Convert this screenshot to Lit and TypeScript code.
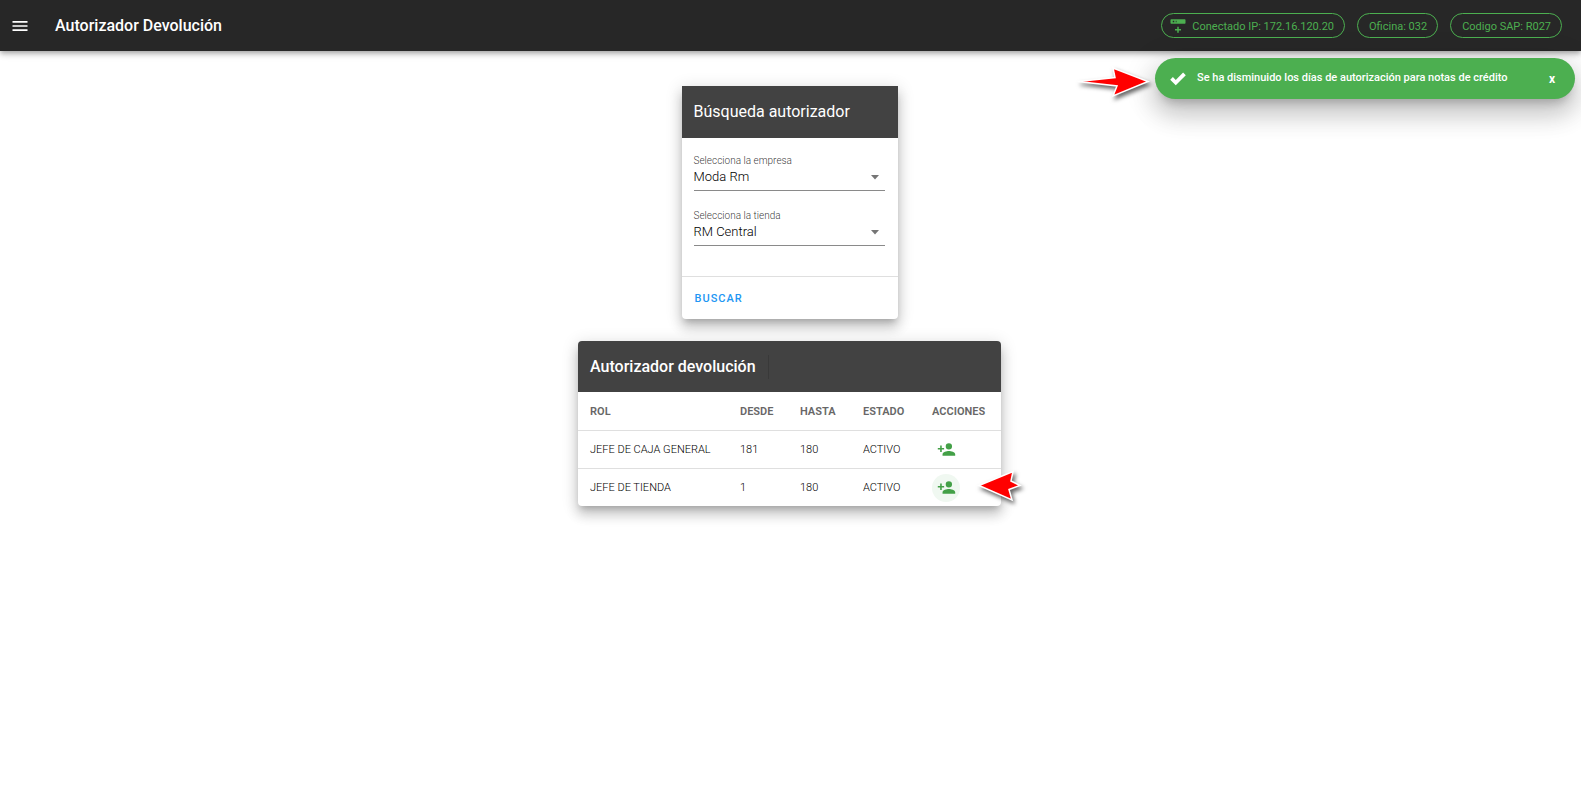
import { LitElement, html, css } from "lit";
import { customElement, state } from "lit/decorators.js";

interface Rol {
  nombre: string;
  desde: number;
  hasta: number;
  estado: string;
  activo?: boolean;
}

@customElement("app-root")
export class AppRoot extends LitElement {
  static styles = css`
    :host {
      display: block;
      min-height: 100vh;
      background: #fff;
      font-family: Roboto, "Liberation Sans", sans-serif;
      color: rgba(0, 0, 0, 0.87);
    }
    *, *::before, *::after { box-sizing: border-box; }
    button, select { font-family: inherit; margin: 0; border: 0; background: none; cursor: pointer; }
    svg { display: block; }

    .bar {
      display: flex;
      align-items: center;
      height: 51px;
      padding: 0 19px 0 10px;
      background: #272727;
      color: #fff;
      box-shadow: 0 2px 4px -1px rgba(0, 0, 0, 0.2), 0 4px 5px rgba(0, 0, 0, 0.14), 0 1px 10px rgba(0, 0, 0, 0.12);
    }
    .menu { padding: 0; color: #fff; }
    .title { margin: 0 auto 0 25px; font-size: 16px; line-height: 24px; font-weight: 500; }
    .chips { display: flex; gap: 12px; }
    .chip {
      display: flex;
      align-items: center;
      height: 25px;
      padding: 1px 10px 0 11px;
      border: 1px solid #4caf50;
      border-radius: 13px;
      color: #4caf50;
      font-size: 11px;
      white-space: nowrap;
    }
    .chip svg { margin: 0 5px 0 -4px; }

    .toast {
      position: absolute;
      top: 58px;
      right: 6px;
      display: flex;
      align-items: center;
      min-width: 420px;
      height: 41px;
      padding: 0 11px 0 14px;
      border-radius: 21px;
      background: #4caf50;
      color: #fff;
      font-size: 11px;
      font-weight: 500;
      box-shadow: 0 8px 10px -5px rgba(0, 0, 0, 0.2), 0 16px 24px 2px rgba(0, 0, 0, 0.14), 0 6px 30px 5px rgba(0, 0, 0, 0.12);
    }
    .toast p { flex: 1; margin: 0 16px 2px 10px; line-height: 16px; }
    .toast button { width: 24px; padding: 0; color: #fff; font-size: 12px; font-weight: 700; }

    .page {
      display: flex;
      flex-direction: column;
      align-items: center;
      gap: 22px;
      padding: 35px 2px 35px 0;
    }
    .card {
      border-radius: 4px;
      background: #fff;
      box-shadow: 0 5px 6px -3px rgba(0, 0, 0, 0.2), 0 9px 12px 1px rgba(0, 0, 0, 0.14), 0 3px 16px 2px rgba(0, 0, 0, 0.12);
    }
    .search { width: 216px; border-top-left-radius: 0; border-top-right-radius: 0; }
    .head {
      margin: 0;
      padding: 14px 12px 13px;
      border-radius: inherit;
      border-bottom-left-radius: 0;
      border-bottom-right-radius: 0;
      background: #424242;
      color: #fff;
      font-size: 16px;
      line-height: 24px;
      font-weight: 400;
    }
    .search .head { padding-bottom: 14px; }
    .medium { font-weight: 500; }
    .medium span {
      display: inline-block;
      padding-right: 12px;
      border-right: 1px solid #393939;
    }
    .fields { display: grid; gap: 19px; padding: 17px 13px 30px 12px; }
    .field { display: grid; border-bottom: 1px solid #8a8a8a; }
    .field label { font-size: 10px; line-height: 12px; font-weight: 300; color: rgba(0, 0, 0, 0.8); }
    .pick { display: grid; align-items: center; }
    .pick > * { grid-area: 1 / 1; }
    .pick select {
      appearance: none;
      width: 100%;
      height: 23px;
      padding: 0 24px 4px 0;
      font-size: 13px;
      font-weight: 300;
      color: #000;
      outline: none;
    }
    .pick svg { justify-self: end; margin: 0 5px 2px 0; pointer-events: none; }
    .actions { padding: 8px 5px; border-top: 1px solid #dfdfdf; }
    .link {
      padding: 0 8px;
      height: 26px;
      color: #2196f3;
      font-size: 11px;
      font-weight: 500;
      letter-spacing: 1px;
      text-transform: uppercase;
      display: block;
    }

    table { border-collapse: separate; border-spacing: 0; font-size: 11px; }
    th, td { height: 38px; padding: 0 12px; text-align: left; font-weight: 400; white-space: nowrap; }
    thead th { font-weight: 700; color: rgba(0, 0, 0, 0.6); }
    tbody td { border-top: 1px solid #dfdfdf; font-weight: 300; color: #000; }
    .c-rol { width: 150px; }
    .c-desde { width: 60px; }
    .c-hasta { width: 63px; }
    .c-estado { width: 69px; }
    .c-acciones { width: 81px; }
    .add {
      display: grid;
      place-items: center;
      width: 28px;
      height: 28px;
      padding: 0;
      border-radius: 50%;
      color: #43a047;
    }
    .on { background: #f0f8f1; }

    .arrow { position: absolute; overflow: visible; filter: drop-shadow(2px 3px 2px rgba(0, 0, 0, 0.6)); pointer-events: none; }
    .to-toast { top: 66px; right: 432px; }
    .anchor { position: relative; }
    .to-row { right: -20px; bottom: 5px; }
  `;

  @state() private empresa = "Moda Rm";
  @state() private tienda = "RM Central";
  @state() private aviso = true;

  private roles: Rol[] = [
    { nombre: "JEFE DE CAJA GENERAL", desde: 181, hasta: 180, estado: "ACTIVO" },
    { nombre: "JEFE DE TIENDA", desde: 1, hasta: 180, estado: "ACTIVO", activo: true },
  ];

  private campo(id: string, texto: string, valor: string) {
    return html`
      <div class="field">
        <label for=${id}>${texto}</label>
        <div class="pick">
          <select id=${id}><option>${valor}</option></select>
          <svg width="10" height="5" viewBox="0 0 10 5" aria-hidden="true"><path d="M1 0h8L5 4.4z" fill="#757575" /></svg>
        </div>
      </div>
    `;
  }

  render() {
    return html`
      <header class="bar">
        <button class="menu" aria-label="Menú">
          <svg width="20" height="20" viewBox="0 0 24 24" fill="currentColor"><path d="M3 6h18v2H3V6m0 5h18v2H3v-2m0 5h18v2H3v-2Z" /></svg>
        </button>
        <h1 class="title">Autorizador Devolución</h1>
        <div class="chips">
          <span class="chip">
            <svg width="18" height="18" viewBox="0 0 24 24" fill="currentColor" aria-hidden="true">
              <path fill-rule="evenodd" d="M3 3h18a1 1 0 0 1 1 1v4a1 1 0 0 1-1 1H3a1 1 0 0 1-1-1V4a1 1 0 0 1 1-1m6 4h1V5H9v2M5 5v2h2V5H5M11 13h2v3h3v2h-3v3h-2v-3H8v-2h3v-3Z" />
            </svg>
            Conectado IP: 172.16.120.20
          </span>
          <span class="chip">Oficina: 032</span>
          <span class="chip">Codigo SAP: R027</span>
        </div>
      </header>

      ${this.aviso
        ? html`
            <div class="toast" role="status">
              <svg width="18" height="18" viewBox="0 0 24 24" fill="currentColor" aria-hidden="true"><path d="M9 20.400 1.600 13l3.600-3.600L9 13.200 18.800 3.400l3.600 3.600L9 20.400Z" /></svg>
              <p>Se ha disminuido los días de autorización para notas de crédito</p>
              <button aria-label="Cerrar" @click=${() => (this.aviso = false)}>x</button>
            </div>
          `
        : null}
      <svg class="arrow to-toast" width="69" height="32" viewBox="0 0 69 32" aria-hidden="true">
        <path d="M-2 15.500 35 11.500 33 2 68 15.500 33 30 37 20Z" fill="#f00" stroke="#fff" stroke-width="1.500" />
      </svg>

      <main class="page">
        <section class="card search">
          <h2 class="head">Búsqueda autorizador</h2>
          <div class="fields">
            ${this.campo("empresa", "Selecciona la empresa", this.empresa)}
            ${this.campo("tienda", "Selecciona la tienda", this.tienda)}
          </div>
          <div class="actions"><button class="link">Buscar</button></div>
        </section>

        <div class="anchor">
          <section class="card">
            <h2 class="head medium"><span>Autorizador devolución</span></h2>
            <table>
              <thead>
                <tr>
                  <th class="c-rol">ROL</th>
                  <th class="c-desde">DESDE</th>
                  <th class="c-hasta">HASTA</th>
                  <th class="c-estado">ESTADO</th>
                  <th class="c-acciones">ACCIONES</th>
                </tr>
              </thead>
              <tbody>
                ${this.roles.map(
                  (r) => html`
                    <tr>
                      <td>${r.nombre}</td>
                      <td>${r.desde}</td>
                      <td>${r.hasta}</td>
                      <td>${r.estado}</td>
                      <td>
                        <button class="add ${r.activo ? "on" : ""}" aria-label="Agregar autorizador">
                          <svg width="19" height="19" viewBox="0 0 24 24" fill="currentColor"><path d="M15 14c-2.670 0-8 1.330-8 4v2h16v-2c0-2.670-5.330-4-8-4m-9-4V7H4v3H1v2h3v3h2v-3h3v-2m6 2a4 4 0 0 0 4-4 4 4 0 0 0-4-4 4 4 0 0 0-4 4 4 4 0 0 0 4 4Z" /></svg>
                        </button>
                      </td>
                    </tr>
                  `
                )}
              </tbody>
            </table>
          </section>
          <svg class="arrow to-row" width="42" height="31" viewBox="0 0 42 31" aria-hidden="true">
            <path d="M0 15.500 34 1.500 32 11 41 15.500 30 19.500 33 30Z" fill="#f00" stroke="#fff" stroke-width="1.500" />
          </svg>
        </div>
      </main>
    `;
  }
}
